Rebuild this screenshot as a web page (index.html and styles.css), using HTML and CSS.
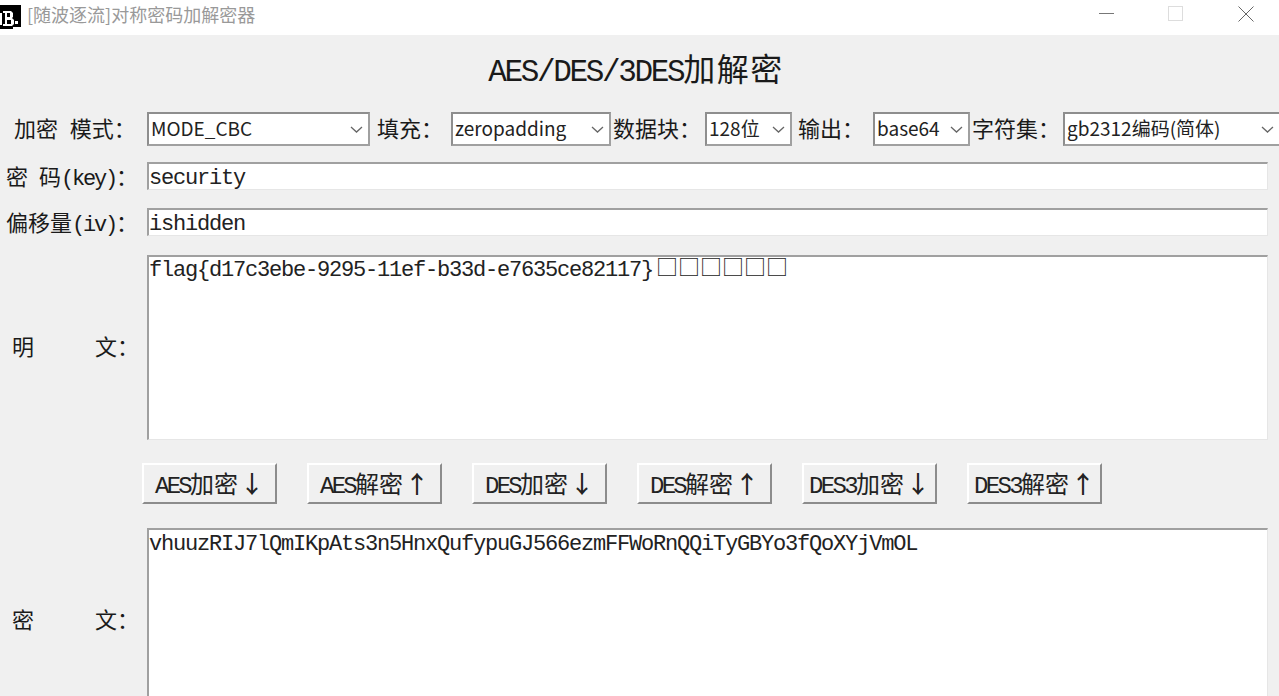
FILE: index.html
```html
<!DOCTYPE html>
<html lang="zh-CN">

<head>
    <meta charset="UTF-8">
    <title>[随波逐流]对称密码加解密器</title>
    <link rel="stylesheet" href="styles.css">
</head>

<body>
    <header class="titlebar">
        <svg class="logo" width="21" height="24" viewBox="0 0 21 24">
            <rect width="21" height="24" fill="#000" />
            <path d="M0 8h2v12h-2zM3 6h8l2 2v4l-1 1 2 2v4l-2 2h-9v-2h2v-11h-2z" fill="#fff" />
            <path d="M7 8h3v4h-3zM7 15h4v4h-4z" fill="#000" />
            <path d="M15 16h3v3h-3zM13 22h8v2h-8z" fill="#fff" />
        </svg>
        <span class="app-name">[随波逐流]对称密码加解密器</span>
        <div class="win-buttons">
            <svg class="win-min" width="16" height="16" viewBox="0 0 16 16"><path d="M0 7.5h15" stroke="#777" /></svg>
            <svg width="16" height="16" viewBox="0 0 16 16"><rect x="1.5" y="0.5" width="14" height="14" fill="none" stroke="#ddd" /></svg>
            <svg width="16" height="16" viewBox="0 0 16 16"><path d="M0.5 0.5l15 15M15.5 0.5l-15 15" stroke="#666" fill="none" /></svg>
        </div>
    </header>

    <main class="panel">
        <h1 class="heading">AES/DES/3DES<span class="heading-cjk">加解密</span></h1>

        <div class="options">
            <span class="opt-label first">加密&nbsp;&nbsp;模式：</span>
            <div class="combo w-mode"><span>MODE_CBC</span><svg class="chev" width="13" height="7" viewBox="0 0 13 7"><path d="M1 1l5.500 5 5.500-5" /></svg></div>
            <span class="opt-label l-fill">填充：</span>
            <div class="combo w-fill"><span>zeropadding</span><svg class="chev" width="13" height="7" viewBox="0 0 13 7"><path d="M1 1l5.500 5 5.500-5" /></svg></div>
            <span class="opt-label l-block">数据块：</span>
            <div class="combo w-block"><span>128位</span><svg class="chev" width="13" height="7" viewBox="0 0 13 7"><path d="M1 1l5.500 5 5.500-5" /></svg></div>
            <span class="opt-label l-out">输出：</span>
            <div class="combo w-out"><span>base64</span><svg class="chev" width="13" height="7" viewBox="0 0 13 7"><path d="M1 1l5.500 5 5.500-5" /></svg></div>
            <span class="opt-label l-charset">字符集：</span>
            <div class="combo w-charset"><span>gb2312编码(简体)</span><svg class="chev" width="13" height="7" viewBox="0 0 13 7"><path d="M1 1l5.500 5 5.500-5" /></svg></div>
        </div>

        <div class="row key-row">
            <label class="row-label"><span class="key-text">密 码<span class="asc">(key)</span>：</span></label>
            <div class="field">security</div>
        </div>
        <div class="row iv-row">
            <label class="row-label"><span>偏移量<span class="asc">(iv)</span>：</span></label>
            <div class="field">ishidden</div>
        </div>

        <div class="row plain-row">
            <label class="row-label spread"><span>明</span><span>文：</span></label>
            <div class="box plain">flag{d17c3ebe-9295-11ef-b33d-e7635ce82117}<span class="tofu">□□□□□□</span></div>
        </div>

        <div class="actions">
            <button class="btn"><span class="asc-btn">AES</span><span class="cjk">加密</span><span class="arrow">↓</span></button>
            <button class="btn"><span class="asc-btn">AES</span><span class="cjk">解密</span><span class="arrow">↑</span></button>
            <button class="btn"><span class="asc-btn">DES</span><span class="cjk">加密</span><span class="arrow">↓</span></button>
            <button class="btn"><span class="asc-btn">DES</span><span class="cjk">解密</span><span class="arrow">↑</span></button>
            <button class="btn"><span class="asc-btn">DES3</span><span class="cjk">加密</span><span class="arrow">↓</span></button>
            <button class="btn"><span class="asc-btn">DES3</span><span class="cjk">解密</span><span class="arrow">↑</span></button>
        </div>

        <div class="row cipher-row">
            <label class="row-label spread"><span>密</span><span>文：</span></label>
            <div class="box cipher">vhuuzRIJ7lQmIKpAts3n5HnxQufypuGJ566ezmFFWoRnQQiTyGBYo3fQoXYjVmOL</div>
        </div>
    </main>
</body>

</html>
```
FILE: styles.css
```css
* {
    box-sizing: border-box;
}

html,
body {
    margin: 0;
    height: 696px;
    overflow: hidden;
}

body {
    background: #f0f0f0;
    color: #1a1a1a;
    font-family: "Noto Sans CJK SC", sans-serif;
}

/* Title bar */
.titlebar {
    height: 35px;
    background: #fff;
    display: flex;
    align-items: center;
    padding-bottom: 8px;
}

.logo {
    margin-top: 6px;
}

.app-name {
    margin-left: 6px;
    font-size: 18px;
    color: #999;
}

.win-buttons {
    margin-left: auto;
    display: flex;
    gap: 55px;
    padding-right: 25px;
}

.win-min {
    margin-left: 3px;
    margin-right: -3px;
}

/* Main panel */
.heading {
    margin: 0;
    padding: 18px 7px 0 0;
    height: 77px;
    text-align: center;
    font-family: "Liberation Mono", "Noto Sans CJK SC", monospace;
    font-size: 31px;
    letter-spacing: -2.350px;
    font-weight: normal;
    line-height: 40px;
    white-space: nowrap;
}

.heading-cjk {
    font-size: 32px;
    letter-spacing: 1.500px;
}

.options {
    display: flex;
    align-items: center;
    height: 34px;
    white-space: nowrap;
    font-size: 22px;
}

.opt-label {
    flex: none;
    line-height: 30px;
    padding-bottom: 4px;
}

.opt-label.first {
    width: 133px;
    margin: 0 0 0 14px;
    word-spacing: 1px;
}

.l-fill {
    width: 81px;
    padding-left: 7px;
}

.l-block {
    width: 94px;
    padding-left: 2px;
}

.l-out {
    width: 81px;
    padding-left: 6px;
}

.l-charset {
    width: 93px;
    padding-left: 2px;
}

.combo {
    flex: none;
    height: 34px;
    background: #fff;
    border: 2px solid #8e8e8e;
    border-color: #8e8e8e #a0a0a0 #a0a0a0 #8e8e8e;
    display: flex;
    align-items: center;
    justify-content: space-between;
    padding: 0 5px 3px 2px;
    font-size: 19px;
    color: #222;
}

.chev {
    flex: none;
    margin-top: 3px;
    fill: none;
    stroke: #666;
    stroke-width: 1.3;
}

.w-mode {
    width: 223px;
}

.w-fill {
    width: 160px;
}

.w-block {
    width: 87px;
}

.w-out {
    width: 97px;
}

.w-charset {
    width: 220px;
    padding-right: 7px;
}

/* Rows with a label on the left */
.row {
    display: flex;
    align-items: center;
    padding-right: 11px;
}

.key-row {
    margin-top: 16px;
    height: 28px;
}

.iv-row {
    margin-top: 18px;
    height: 28px;
}

.plain-row {
    margin-top: 19px;
    height: 185px;
}

.cipher-row {
    margin-top: 24px;
    height: 185px;
}

.row-label {
    flex: none;
    width: 147px;
    padding-left: 6px;
    padding-bottom: 2px;
    font-size: 22px;
    white-space: nowrap;
}

.key-text {
    word-spacing: 6px;
}

.asc {
    font-family: "Liberation Mono", monospace;
    font-size: 22px;
    letter-spacing: -2.200px;
}

.row-label.spread {
    display: flex;
    justify-content: space-between;
    padding-left: 12px;
    padding-right: 8px;
    padding-bottom: 6px;
}

.field,
.box {
    flex: 1;
    background: #fff;
    border: solid #a0a0a0;
    border-width: 2px 1px 1px 2px;
    border-right-color: #e6e6e6;
    border-bottom-color: #e6e6e6;
    font-family: "Liberation Mono", "Noto Sans CJK SC", monospace;
    font-size: 22px;
    letter-spacing: -1.200px;
    color: #222;
}

.field {
    height: 28px;
    line-height: 30px;
}

.box {
    height: 185px;
    line-height: 28px;
}

.cipher {
    padding-top: 1px;
}

.tofu {
    margin-left: 3px;
    font-family: "Noto Sans CJK SC", sans-serif;
    font-size: 22px;
    line-height: 0;
    vertical-align: 1px;
    letter-spacing: 0;
}

/* Buttons */
.actions {
    display: flex;
    gap: 30px;
    margin-top: 23px;
    padding-left: 142px;
}

.btn {
    width: 135px;
    height: 41px;
    padding: 0 0 3px;
    background: #f0f0f0;
    border: 2px solid;
    border-color: #fff #8c8c8c #8c8c8c #fff;
    font-family: "Liberation Mono", "Noto Sans CJK SC", monospace;
    font-size: 20px;
    color: #222;
}

.asc-btn {
    font-size: 24px;
    letter-spacing: -2.700px;
}

.cjk {
    font-size: 24px;
}

.arrow {
    font-family: "Noto Sans CJK SC", sans-serif;
    font-size: 24px;
    font-weight: 500;
    margin-left: 2px;
}
```
